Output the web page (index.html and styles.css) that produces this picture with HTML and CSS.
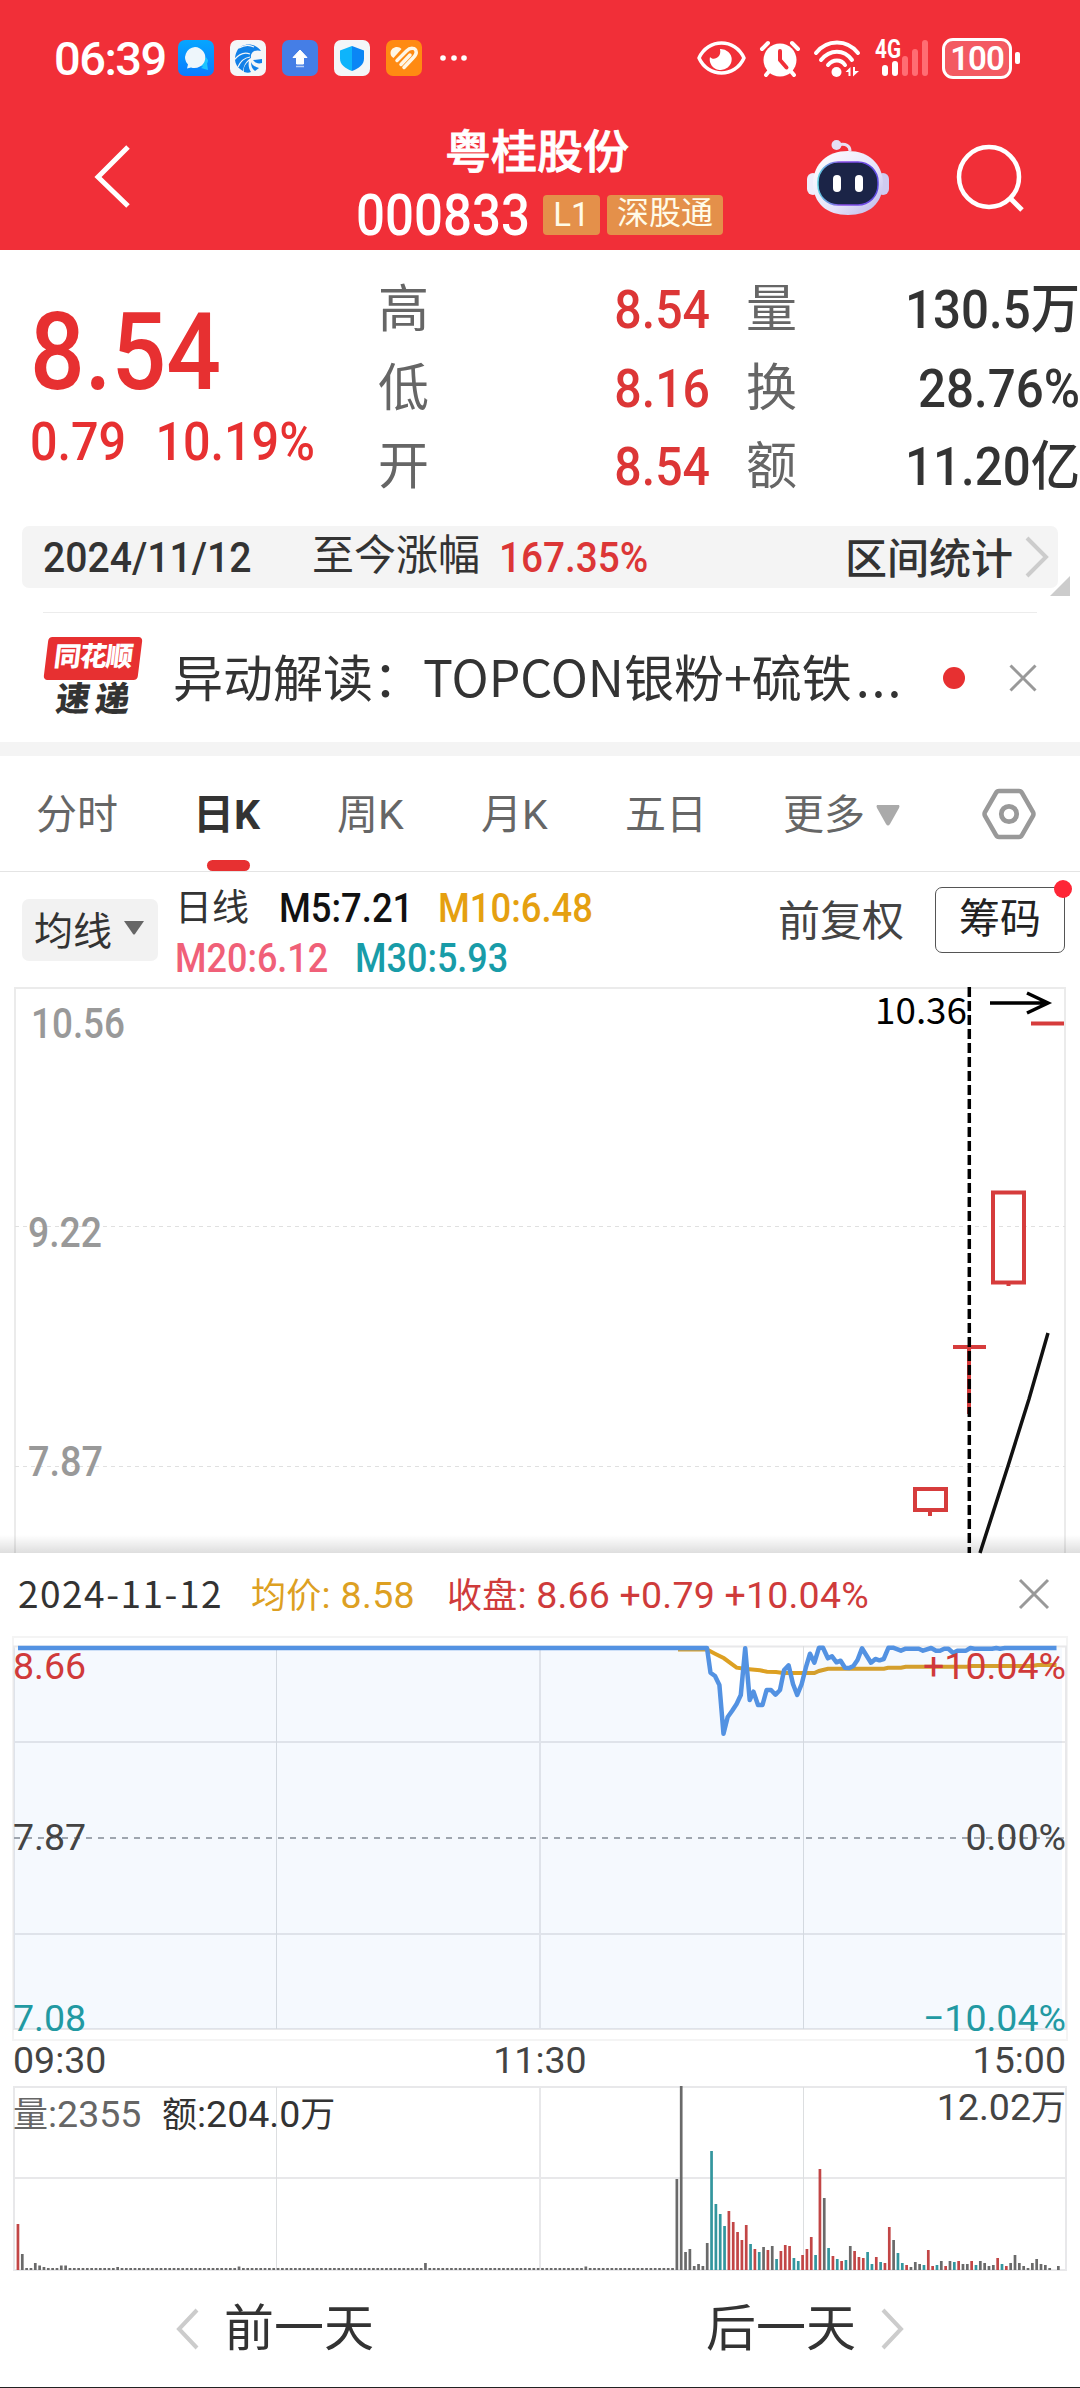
FILE: index.html
```html
<!DOCTYPE html>
<html lang="zh-CN">

<head>
    <meta charset="UTF-8">
    <meta name="viewport" content="width=device-width, initial-scale=1.0">
    <title>粤桂股份 000833</title>
    <link rel="stylesheet" href="styles.css">
</head>

<body>
    <header class="header">
        <div class="statusbar">
            <span class="time">06:39</span>
            <div class="apps">
                <svg class="app" viewBox="0 0 36 36">
                    <defs>
                        <linearGradient id="chat" x1="0" y1="0" x2="0" y2="1">
                            <stop offset="0" stop-color="#06a6ff" />
                            <stop offset="1" stop-color="#0a7bff" />
                        </linearGradient>
                    </defs>
                    <rect width="36" height="36" rx="7" fill="url(#chat)" />
                    <path d="M22 26a6 6 0 0 0 8-6l-2-3z M23 28l7 2-1-7z" fill="#1cc4ff" />
                    <path d="M17 7a11 10.500 0 1 1-4 20.500l-4 1 1-4A11 10.500 0 0 1 17 7z" fill="#eef6fb" />
                </svg>
                <svg class="app" viewBox="0 0 36 36">
                    <rect width="36" height="36" rx="7" fill="#f4f6f8" />
                    <path d="M31 11C26 3 12 2 7 11c-4 8-2 16 6 20 1-7 4-11 8-13-1-6 5-9 10-7z" fill="#1280e8" />
                    <path d="M19 21c-4 3-6 7-5 11 3 1 5 1 7 0-2-3-3-7-2-11zm2 1c0 4 1 7 4 9l4-3c-4-1-7-3-8-6zm2-2c2 3 5 4 9 3v-4z" fill="#1280e8" />
                    <path d="M4 20c5-6 11-8 16-6M8 27c2-5 6-9 12-10M9 8c5-3 11-3 15-1" stroke="#f4f6f8" stroke-width="1.200" fill="none" />
                </svg>
                <svg class="app" viewBox="0 0 36 36">
                    <rect width="36" height="36" rx="7" fill="#457ee6" />
                    <path d="M18 10l7 7.500h-3.500v6.500h-7v-6.500H11z" fill="#fff" stroke="#fff" stroke-linejoin="round" />
                    <path d="M14 26.500h8" stroke="#b9cff7" stroke-width="1.500" />
                </svg>
                <svg class="app" viewBox="0 0 36 36">
                    <rect width="36" height="36" rx="7" fill="#f4f6f8" />
                    <path d="M18 6l12 4.500v8c0 6-5 10-12 12.500z" fill="#0b86f5" />
                    <path d="M18 6L6 10.500v8c0 6 5 10 12 12.500z" fill="#0eb4fb" />
                </svg>
                <svg class="app" viewBox="0 0 36 36">
                    <rect width="36" height="36" rx="7" fill="#ff8a12" />
                    <path d="M4.500 13c0-6 8-8 11-4L7.500 18c-2-1-3-3-3-5z" fill="#fff6e6" />
                    <path d="M11 20.500L20.500 11c4-4 9-3 9.500 0 1 3-1 5-3 7L18 27.500M15 24.500L24 15" fill="none" stroke="#fff6e6" stroke-width="3.500" stroke-linecap="round" stroke-linejoin="round" />
                </svg>
            </div>
            <svg class="dots" width="28" height="8" viewBox="0 0 28 8">
                <g fill="#fff">
                    <circle cx="4" cy="4" r="2.800" />
                    <circle cx="15" cy="4" r="2.800" />
                    <circle cx="25" cy="4" r="2.800" />
                </g>
            </svg>
            <div class="system">
                <svg width="49" height="36" viewBox="0 0 49 36">
                    <path d="M2 18C11 -2 38 -2 47 18C38 38 11 38 2 18z" fill="none" stroke="#fff" stroke-width="3.500" stroke-linejoin="round" />
                    <path d="M23 9a11 10.500 0 1 1-10 8c3 4 12 1 10-8z" fill="#fff" />
                </svg>
                <svg class="alarm" width="40" height="37" viewBox="0 0 40 37">
                    <circle cx="20" cy="20" r="16.500" fill="#fff" />
                    <path d="M2 9l6-6M38 9l-6-6M6 35l5-6M34 35l-5-6" stroke="#fff" stroke-width="4" stroke-linecap="round" />
                    <path d="M20 11v9l6.500 7.500" stroke="#f12f38" stroke-width="4" fill="none" stroke-linecap="round" stroke-linejoin="round" />
                </svg>
                <svg class="wifi" width="48" height="37" viewBox="0 0 48 37">
                    <path d="M3 13C14 -1 34 -1 45 13M8 20C17 9 31 9 39 20M15 25C20 19 28 19 32 25" fill="none" stroke="#fff" stroke-width="4" stroke-linecap="round" />
                    <circle cx="23.500" cy="32" r="5" fill="#fff" />
                    <path d="M32.500 32l5-5v9h-2v-4zM46 31l-6 5.500v-9.500h2v4z" fill="#fff" />
                </svg>
                <svg class="signal" width="55" height="37" viewBox="0 0 55 37">
                    <text x="0" y="18" class="net" textLength="26" lengthAdjust="spacingAndGlyphs">4G</text>
                    <g fill="#fff">
                        <rect x="7" y="25" width="6" height="11" rx="3" />
                        <rect x="17" y="21" width="6" height="15" rx="3" />
                    </g>
                    <g fill="#ff6d73">
                        <rect x="27" y="16" width="6" height="20" rx="3" />
                        <rect x="37" y="9" width="6" height="27" rx="3" />
                        <rect x="47" y="0" width="6" height="36" rx="3" />
                    </g>
                </svg>
                <span class="battery">100</span>
                <span class="nub"></span>
            </div>
        </div>
        <div class="titlebar">
            <svg class="back" width="40" height="66" viewBox="0 0 40 66">
                <path d="M36 3L6 33l30 29" fill="none" stroke="#fff" stroke-width="5" />
            </svg>
            <div class="title">
                <h1>粤桂股份</h1>
                <div class="code">
                    <span class="din number">000833</span>
                    <span class="badge">L1</span>
                    <span class="badge wide">深股通</span>
                </div>
            </div>
            <svg class="robot" width="82" height="72" viewBox="0 0 82 72">
                <defs>
                    <linearGradient id="head" x1="0" y1="0" x2="1" y2="1">
                        <stop offset="0" stop-color="#fff" />
                        <stop offset="0.600" stop-color="#e6e3fa" />
                        <stop offset="1" stop-color="#b9b4e6" />
                    </linearGradient>
                    <linearGradient id="rim" x1="0" y1="0" x2="1" y2="0">
                        <stop offset="0" stop-color="#5fd0e0" />
                        <stop offset="0.400" stop-color="#8a4be8" />
                        <stop offset="1" stop-color="#5b4be0" />
                    </linearGradient>
                </defs>
                <path d="M31 5c8-2 12 1 12 6" fill="none" stroke="#e8dff2" stroke-width="3" />
                <circle cx="29.500" cy="5" r="5" fill="#e6def5" />
                <rect x="0" y="33" width="12" height="22" rx="6" fill="#efedfb" />
                <rect x="70" y="33" width="12" height="22" rx="6" fill="#cfcaf0" />
                <path d="M41 11C62 11 75 24 76 42C76 64 62 75 41 75C20 75 6 64 6 42C7 24 20 11 41 11z" fill="url(#head)" />
                <rect x="11" y="22" width="60" height="43" rx="20" fill="#1b2447" stroke="url(#rim)" stroke-width="1.500" />
                <rect x="26" y="35" width="8" height="17" rx="4" fill="#fff" />
                <rect x="48" y="35" width="8" height="17" rx="4" fill="#fff" />
            </svg>
            <svg class="search" width="68" height="68" viewBox="0 0 68 68">
                <circle cx="33" cy="33" r="30" fill="none" stroke="#fff" stroke-width="4.500" />
                <path d="M54 54l12 12" stroke="#fff" stroke-width="5" />
            </svg>
        </div>
    </header>

    <section class="quote">
        <div class="price">
            <div class="din last">8.54</div>
            <div class="din change"><span>0.79</span><span>10.19%</span></div>
        </div>
        <div class="stats">
            <span class="label">高</span><span class="din up">8.54</span><span class="label">量</span><span class="din total">130.5万</span>
            <span class="label">低</span><span class="din up">8.16</span><span class="label">换</span><span class="din total">28.76%</span>
            <span class="label">开</span><span class="din up">8.54</span><span class="label">额</span><span class="din total">11.20亿</span>
        </div>
    </section>

    <section class="range">
        <span class="din date">2024/11/12</span>
        <span class="since">至今涨幅</span>
        <span class="din gain">167.35%</span>
        <span class="interval">区间统计</span>
        <svg width="26" height="42" viewBox="0 0 26 42">
            <path d="M3 2l19 19L3 40" fill="none" stroke="#ccc" stroke-width="4" />
        </svg>
        <i class="corner"></i>
    </section>

    <section class="news">
        <div class="logo">
            <span class="logo-top">同花顺</span>
            <span class="logo-bottom">速 递</span>
        </div>
        <p>异动解读：TOPCON银粉+硫铁<span class="ellipsis">...</span></p>
        <i class="dot"></i>
        <svg width="28" height="28" viewBox="0 0 28 28">
            <path d="M1.500 1.500l25 25M26.500 1.500l-25 25" stroke="#999" stroke-width="3" />
        </svg>
    </section>

    <nav class="tabs">
        <span>分时</span>
        <span class="active">日K</span>
        <span>周K</span>
        <span>月K</span>
        <span>五日</span>
        <span class="more">更多<svg width="24" height="21" viewBox="0 0 24 21"><path d="M1 0h22q1 1 0 3L14 19q-2 3-4 0L1 3q-1-2 0-3z" fill="#aaa" /></svg></span>
        <svg class="gear" width="54" height="52" viewBox="0 0 54 52">
            <path d="M17 3h20q2 0 3 2l11 19q1 2 0 4L40 47q-1 2-3 2H17q-2 0-3-2L3 28q-1-2 0-4L14 5q1-2 3-2z" fill="none" stroke="#999" stroke-width="4.500" />
            <circle cx="27" cy="26" r="7.700" fill="none" stroke="#999" stroke-width="4.800" />
        </svg>
    </nav>

    <section class="ma">
        <div class="select">均线<svg width="20" height="14" viewBox="0 0 20 14"><path d="M0 0h20L11 13q-1 1-2 0z" fill="#666" /></svg></div>
        <div class="values">
            <div><span class="kline">日线</span><span class="din m5">M5:7.21</span><span class="din m10">M10:6.48</span></div>
            <div><span class="din m20">M20:6.12</span><span class="din m30">M30:5.93</span></div>
        </div>
        <span class="adjust">前复权</span>
        <span class="chips">筹码<i class="chips-dot"></i></span>
    </section>

    <svg class="kchart" width="1080" height="572" viewBox="0 980 1080 572">
        <defs>
            <linearGradient id="shade" x1="0" y1="0" x2="0" y2="1">
                <stop offset="0" stop-color="#000" stop-opacity="0" />
                <stop offset="1" stop-color="#000" stop-opacity="0.130" />
            </linearGradient>
        </defs>
        <path d="M15 1552V987H1065V1552" fill="none" stroke="#ebebeb" stroke-width="2" />
        <path d="M15 1225.500H1065M15 1465.500H1065" stroke="#e0e0e0" stroke-width="1" stroke-dasharray="4 4" />
        <g class="axis">
            <text x="31" y="1036.500" textLength="94" lengthAdjust="spacingAndGlyphs">10.56</text>
            <text x="28" y="1246" textLength="74" lengthAdjust="spacingAndGlyphs">9.22</text>
            <text x="28" y="1475" textLength="75" lengthAdjust="spacingAndGlyphs">7.87</text>
        </g>
        <g fill="none" stroke="#d63c3c" stroke-width="4">
            <path d="M1031 1022.500h33" />
            <path d="M993 1191.500h31v90h-31zM1008.500 1282v3" />
            <path d="M953 1346h33M969 1346v67" />
            <path d="M915 1488h31v21h-31zM930 1509v6" />
        </g>
        <path d="M1048 1332L1029 1398 1008 1465 980 1552" fill="none" stroke="#111" stroke-width="3.500" />
        <path d="M969.300 986V1552" stroke="#000" stroke-width="3.500" stroke-dasharray="10 4" />
        <path d="M990 1002h57M1027 992l21 10-21 10" fill="none" stroke="#000" stroke-width="3.500" />
        <text x="875" y="1023" class="high" textLength="92" lengthAdjust="spacingAndGlyphs">10.36</text>
        <rect y="1534" width="1080" height="18" fill="url(#shade)" />
    </svg>

    <section class="sheet">
        <div class="sheet-head">
            <span class="day">2024-11-12</span>
            <span class="avg"><b>均价</b>: 8.58</span>
            <span class="close"><b>收盘</b>: 8.66 +0.79 +10.04%</span>
            <svg width="30" height="30" viewBox="0 0 30 30">
                <path d="M1 1l28 28M29 1L1 29" stroke="#999" stroke-width="3" />
            </svg>
        </div>
        <svg class="minute" width="1080" height="650" viewBox="0 1630 1080 650">
            <rect x="13" y="1636" width="1054" height="403" fill="none" stroke="#f4f4f4" stroke-width="2" />
            <g fill="none" stroke="#e8e8ea" stroke-width="2">
                <path d="M14 1645.500H1066V2028H14zM14 1741H1066M14 1933H1066M540 1645V2028" />
                <path d="M14 2086H1066V2269H14zM14 2177H1066M540 2086V2269" />
            </g>
            <path d="M276.500 1645V2028M803.500 1645V2028M276.500 2086V2269M803.500 2086V2269" stroke="#dcdee0" />
            <path d="M14 1837H1066" stroke="#a5a8ac" stroke-width="2" stroke-dasharray="6 6" />
            <polyline id="avg" fill="none" stroke="#dda022" stroke-width="4" />
            <polygon id="area" fill="#4a90e8" fill-opacity="0.055" />
            <polyline id="price" fill="none" stroke="#5392e2" stroke-width="4.500" stroke-linejoin="round" />
            <g class="labels">
                <text x="13" y="1678" class="t-up">8.66</text>
                <text x="13" y="1849">7.87</text>
                <text x="13" y="2030" class="t-down">7.08</text>
                <text x="1066" y="1678" class="t-up end">+10.04%</text>
                <text x="1066" y="1849" class="end">0.00%</text>
                <text x="1066" y="2030" class="t-down end">−10.04%</text>
                <text x="13" y="2072">09:30</text>
                <text x="540" y="2072" class="middle">11:30</text>
                <text x="1066" y="2072" class="end">15:00</text>
                <text x="13" y="2126" class="t-vol"><tspan class="cjk">量</tspan>:2355</text>
                <text x="162" y="2126" class="t-amt"><tspan class="cjk">额</tspan>:204.0<tspan class="cjk">万</tspan></text>
                <text x="1066" y="2119" class="end">12.02<tspan class="cjk">万</tspan></text>
            </g>
            <g id="volume"></g>
        </svg>
        <div class="pager">
            <span class="prev"><svg width="24" height="42" viewBox="0 0 24 42"><path d="M21 2L3 21l18 19" fill="none" stroke="#ccc" stroke-width="4" /></svg>前一天</span>
            <span class="next">后一天<svg width="24" height="42" viewBox="0 0 24 42"><path d="M3 2l18 19L3 40" fill="none" stroke="#ccc" stroke-width="4" /></svg></span>
        </div>
    </section>

    <script src="chart.js"></script>
</body>

</html>
```
FILE: styles.css
```css
* {
    box-sizing: border-box;
}

body {
    margin: 0;
    width: 1080px;
    height: 2388px;
    overflow: hidden;
    background: #fff;
    color: #333;
    font-family: Roboto, "Noto Sans CJK SC", sans-serif;
    border-bottom: 1px solid #222;
}

svg {
    display: block;
    flex: none;
    overflow: visible;
}

/* narrow numerals */
.din {
    display: block;
    flex: none;
    font-weight: 500;
    white-space: nowrap;
    transform: scaleX(0.91);
    transform-origin: left center;
}

/* header */
.header {
    height: 250px;
    background: #f12f38;
    color: #fff;
}

.statusbar {
    display: flex;
    align-items: center;
    height: 116px;
    padding-left: 54px;
}

.time {
    width: 124px;
    font-size: 47px;
    font-weight: 500;
    letter-spacing: -1.5px;
}

.apps {
    display: flex;
    gap: 16px;
}

.app {
    width: 36px;
    height: 36px;
}

.dots {
    margin-left: 17px;
}

.system {
    display: flex;
    align-items: center;
    margin-left: 230px;
}

.alarm {
    margin-left: 14px;
}

.wifi {
    margin-left: 13px;
}

.signal {
    margin-left: 14px;
}

.net {
    font-size: 25px;
    font-weight: 700;
    fill: #fff;
}

.battery {
    margin-left: 12px;
    width: 70px;
    height: 41px;
    border: 3px solid #fff;
    border-radius: 11px;
    background: #f35a62;
    font-size: 33px;
    font-weight: 600;
    line-height: 35px;
    text-align: center;
    letter-spacing: -1px;
}

.nub {
    margin-left: 3px;
    width: 5px;
    height: 12px;
    border-radius: 2px;
    background: #fff;
}

.titlebar {
    display: flex;
    padding: 0 56px 0 92px;
}

.back {
    margin-top: 28px;
}

.title {
    width: 366px;
    margin-left: 224px;
    padding-top: 3px;
}

.title h1 {
    margin: 0;
    padding-left: 89px;
    font-size: 46px;
    font-weight: 500;
    line-height: 66px;
    -webkit-text-stroke: 0.8px #fff;
}

.code {
    display: flex;
    align-items: center;
    height: 60px;
    font-size: 58px;
}

.number {
    width: 174px;
    transform: scaleX(0.88);
}

.badge {
    flex: none;
    width: 57px;
    height: 40px;
    margin-left: 13px;
    border-radius: 4px;
    background: #e4904a;
    font-size: 33px;
    line-height: 39px;
    text-align: center;
    color: #fffbe8;
}

.badge.wide {
    width: 116px;
    margin-left: 7px;
    font-size: 32px;
    line-height: 36px;
}

.robot {
    margin: 24px 0 0 85px;
}

.search {
    margin: 28px 0 0 67px;
}

/* quote */
.quote {
    display: flex;
    height: 276px;
}

.price {
    width: 378px;
    padding: 43px 0 0 30px;
    color: #e73031;
}

.last {
    font-size: 107px;
    line-height: 120px;
    transform: scaleX(0.9);
}

.change {
    display: flex;
    gap: 32px;
    font-size: 53px;
    line-height: 58px;
    transform: scaleX(0.915);
}

.stats {
    display: grid;
    width: 702px;
    grid-template-columns: 52px 280px 88px 1fr;
    grid-auto-rows: 78.5px;
    align-items: center;
    padding-top: 21px;
    font-size: 53px;
    line-height: 78px;
}

.stats .label {
    font-size: 51px;
    color: #666;
}

.stats .din {
    text-align: right;
    transform-origin: right center;
}

.stats .total {
    transform: scaleX(0.93);
}

.stats .label:nth-child(4n+3) {
    padding-left: 36px;
}

.up {
    color: #dc3636;
}

/* range */
.range {
    position: relative;
    display: flex;
    align-items: center;
    height: 62px;
    margin: 0 22px;
    padding-left: 21px;
    border-radius: 7px;
    background: #f4f4f4;
    font-size: 42px;
    line-height: 62px;
}

.date {
    width: 269px;
    font-size: 43px;
}

.since {
    width: 187px;
    padding-bottom: 2px;
    line-height: 58px;
}

.gain {
    width: 346px;
    font-size: 43px;
    color: #dc3636;
    transform: scaleX(0.9);
}

.interval {
    width: 179px;
    padding-top: 6px;
    font-weight: 500;
    line-height: 56px;
}

.corner {
    position: absolute;
    right: -12px;
    bottom: -8px;
    border-left: 20px solid transparent;
    border-bottom: 20px solid #ccc;
}

/* news */
.news {
    display: flex;
    align-items: center;
    height: 130px;
    margin: 24px 43px 0;
    border-top: 1px solid #ececec;
}

.logo {
    width: 100px;
    height: 82px;
    text-align: center;
    font-weight: 900;
}

.logo-top {
    display: block;
    height: 43px;
    margin: 0 3px;
    border-radius: 4px;
    background: #e73031;
    color: #fff;
    font-size: 27px;
    line-height: 41px;
    letter-spacing: -1px;
    transform: skewX(-7deg);
}

.logo-bottom {
    display: block;
    font-size: 34px;
    line-height: 38px;
    transform: skewX(-7deg);
    word-spacing: -3px;
}

.news p {
    flex: none;
    width: 779px;
    margin: 0;
    padding: 0 0 6px 30px;
    font-family: "Noto Sans CJK SC", sans-serif;
    font-size: 50px;
    line-height: 70px;
    white-space: nowrap;
}

.ellipsis {
    margin-left: 4px;
    letter-spacing: 2px;
}

.dot {
    flex: none;
    width: 22px;
    height: 22px;
    margin: 0 44px 0 21px;
    border-radius: 50%;
    background: #e73031;
}

/* tabs */
.tabs {
    display: flex;
    align-items: center;
    height: 130px;
    padding-left: 36px;
    border-top: 14px solid #f4f4f4;
    border-bottom: 1px solid #e4e4e4;
    font-size: 41px;
    line-height: 56px;
    color: #666;
}

.tabs span {
    flex: none;
    width: 144px;
    padding-top: 3px;
}

.tabs span:first-child {
    width: 157px;
}

.tabs .active {
    position: relative;
    font-weight: 700;
    color: #333;
}

.tabs .active::after {
    content: "";
    position: absolute;
    left: 14px;
    bottom: -28px;
    width: 43px;
    height: 11px;
    border-radius: 6px;
    background: #e73031;
}

.tabs .more {
    display: flex;
    align-items: center;
    gap: 11px;
    width: 199px;
    margin-left: 14px;
}

/* moving averages */
.ma {
    display: flex;
    align-items: flex-start;
    height: 109px;
    padding: 15px 14px 0 22px;
}

.select {
    display: flex;
    align-items: center;
    gap: 12px;
    width: 136px;
    height: 62px;
    margin-top: 12px;
    padding: 0 0 4px 12px;
    border-radius: 7px;
    background: #f2f2f2;
    font-size: 39px;
}

.values {
    width: 604px;
    margin-top: -3px;
    padding-left: 17px;
    font-size: 40px;
}

.values div {
    display: flex;
    height: 50px;
    line-height: 50px;
}

.kline {
    width: 104px;
    font-size: 37px;
}

.m5 {
    width: 159px;
    color: #111;
}

.m10 {
    color: #e5a010;
}

.m20 {
    width: 180px;
    color: #f06078;
    transform: scaleX(0.9);
}

.m30 {
    color: #189ca8;
    transform: scaleX(0.9);
}

.adjust {
    width: 173px;
    padding: 3px 0 0 16px;
    font-size: 42px;
    line-height: 64px;
    color: #444;
}

.chips {
    position: relative;
    width: 130px;
    height: 66px;
    border: 1px solid #555;
    border-radius: 7px;
    font-size: 41px;
    line-height: 63px;
    text-align: center;
    color: #222;
}

.chips-dot {
    position: absolute;
    top: -8px;
    right: -8px;
    width: 18px;
    height: 18px;
    border-radius: 50%;
    background: #fe2636;
}

/* charts */
.axis {
    font-size: 42px;
    font-weight: 500;
    fill: #999;
}

.high {
    font-family: "Noto Sans CJK SC", sans-serif;
    font-size: 36px;
}

.sheet-head {
    display: flex;
    align-items: center;
    height: 78px;
    padding: 6px 0 0 18px;
    font-size: 37.5px;
    line-height: 50px;
}

.sheet-head span {
    height: 50px;
    white-space: pre;
}

.sheet-head b {
    font-size: 35px;
    font-weight: 400;
    line-height: 1;
}

.sheet-head .day {
    width: 233px;
    font-family: "Noto Sans CJK SC", sans-serif;
    font-size: 37px;
    line-height: 44px;
    letter-spacing: 1.5px;
}

.sheet-head .avg {
    width: 196px;
    letter-spacing: 0.3px;
    color: #dda022;
}

.sheet-head .close {
    letter-spacing: 0.2px;
    color: #cf3b3b;
}

.sheet-head svg {
    margin: 0 31px 2px auto;
}

.labels {
    font-size: 37.5px;
    fill: #444;
}

.cjk {
    font-size: 35px;
}

.end {
    text-anchor: end;
}

.middle {
    text-anchor: middle;
}

.t-up {
    fill: #d03a3a;
}

.t-down {
    fill: #2299a2;
}

.t-vol {
    fill: #666;
}

.t-amt {
    fill: #333;
}

.pager {
    display: flex;
    justify-content: space-between;
    height: 96px;
    padding: 0 176px;
    font-size: 50px;
    line-height: 96px;
}

.pager span {
    display: flex;
    align-items: center;
    gap: 24px;
}
```
FILE: chart.js
```js
const price = [
    [18, 1647], [707, 1647], [710.5, 1671.7], [715, 1675], [719.4, 1684], [723.5, 1732.7], [727.7, 1716],
    [732, 1710], [736.6, 1703], [740.8, 1694], [745.2, 1647.3], [749.7, 1699], [753.5, 1690.7], [758, 1704],
    [762.5, 1704], [766.6, 1689], [771, 1689], [775.5, 1693.7], [780, 1689], [784.1, 1669], [788.6, 1664.3],
    [793, 1683], [797.2, 1694], [801.7, 1683], [805.8, 1666.7], [810, 1652.7], [814.4, 1661.7], [819, 1646.7],
    [823, 1646.7], [827.9, 1657.3], [832, 1655.3], [836.5, 1661.3], [840.6, 1659.7], [845, 1666.7],
    [849.2, 1667], [853.4, 1665], [857.5, 1659], [862, 1647.3], [866.8, 1655], [871, 1661.7], [875.4, 1658],
    [879.5, 1659.3], [883.7, 1658], [888.5, 1646.7], [893, 1646.7], [900.9, 1649.7], [905.7, 1647.7],
    [918.8, 1647.7], [923, 1649.7], [931.2, 1647], [936, 1649.7], [940, 1649.7], [944.3, 1647.7],
    [948.4, 1647.7], [953.2, 1652], [957.4, 1649.7], [966, 1649.7], [970.4, 1647], [974.6, 1647.7],
    [992, 1647.7], [996.3, 1647], [1000, 1647.7], [1005, 1647], [1056.5, 1647]
];
const avg = [
    [678, 1648.5], [707, 1648.5], [715, 1652.7], [724, 1657.3], [736.6, 1666.7], [746.6, 1668], [760, 1669.3],
    [767, 1670.7], [776, 1671], [783, 1672], [814.4, 1672], [819, 1670], [828, 1667.7], [884, 1667.7],
    [888, 1666.7], [901, 1666.7], [905.7, 1665.7], [967, 1665.7], [972, 1665], [1032, 1665], [1037.6, 1664],
    [1056.5, 1664]
];

const toPoints = list => list.map(p => p.join(',')).join(' ');
document.querySelector('#price').setAttribute('points', toPoints(price));
document.querySelector('#avg').setAttribute('points', toPoints(avg));
document.querySelector('#area').setAttribute('points',
    toPoints([[14, 1647], ...price, [1062, 1647], [1062, 2028], [14, 2028]]));

// g = flat, r = up, t = down
const colors = { g: '#6a6a6a', r: '#c24646', t: '#33969e' };
const early = { 0: 46, 1: 16, 4: 7, 5: 4.5, 6: 3, 10: 4.5, 11: 4.5, 23: 3, 51: 3.5, 94: 7, 131: 3.5 };
const late = ('g91 g184 g18 g21 g4 g6 g4 g27 t119 t66 t56 t44 r59 r48 r38 r30 r45 t26 r21 t18 g23 r20 g24 t11 ' +
    'r19 r25 r24 t12 t9 r15 r21 r33 t15 r101 g72 t22 r14 t11 r9 t10 g24 r19 r13 r12 t18 t6 r13 t8 r7 r43 g30 ' +
    't17 t7 r5 g3 g8 g6 t5 r20 r4 t5 g9 r4 g9 t8 r9 g6 g6 r9 t5 g9 g7 g4 g5 r12 t6 r4 g7 g15 g7 g4 g2 g7 g11 ' +
    'g6 g5 g2 g0 g4').split(' ');

const volume = document.querySelector('#volume');
function addBar(index, height, color) {
    const rect = document.createElementNS('http://www.w3.org/2000/svg', 'rect');
    rect.setAttribute('x', 16.6 + index * 4.335);
    rect.setAttribute('y', 2269 - height);
    rect.setAttribute('width', 2.7);
    rect.setAttribute('height', height);
    rect.setAttribute('fill', colors[color]);
    volume.appendChild(rect);
}
for (let i = 0; i < 152; i++) {
    addBar(i, early[i] || 2, i === 0 ? 'r' : 'g');
}
late.forEach((bar, i) => addBar(152 + i, Number(bar.slice(1)), bar[0]));
```
